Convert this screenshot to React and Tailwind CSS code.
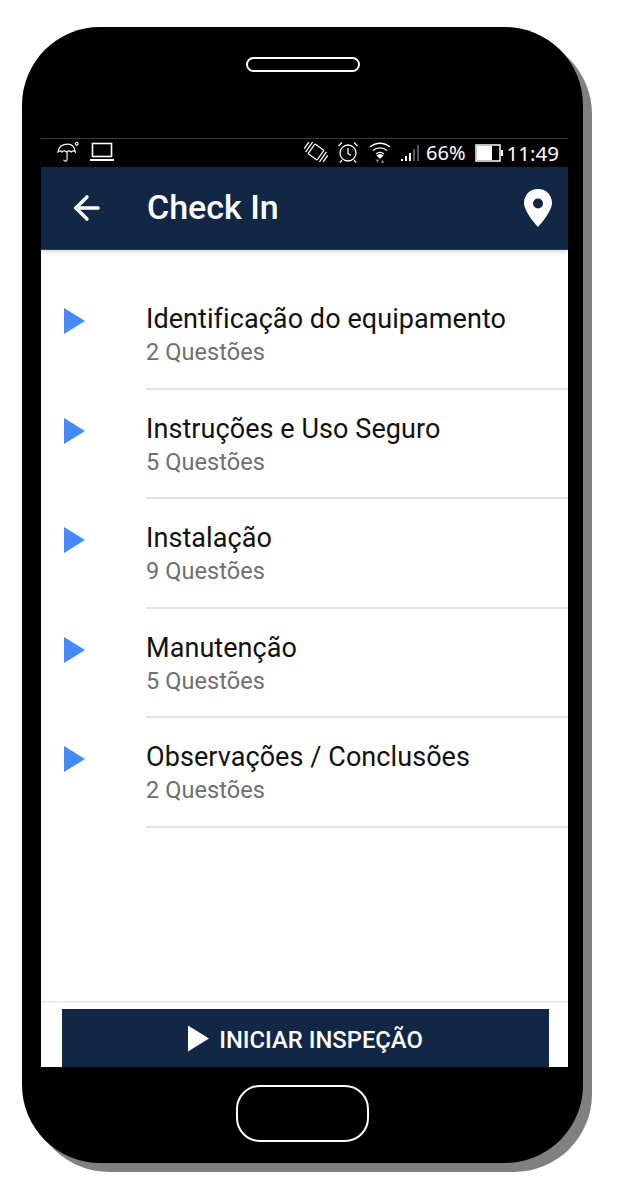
import { ArrowLeft } from 'lucide-react'

const sections = [
  { title: 'Identificação do equipamento', count: '2 Questões' },
  { title: 'Instruções e Uso Seguro', count: '5 Questões' },
  { title: 'Instalação', count: '9 Questões' },
  { title: 'Manutenção', count: '5 Questões' },
  { title: 'Observações / Conclusões', count: '2 Questões' },
]

function StatusBar() {
  return (
    <div className="h-[29px] shrink-0 bg-black border-t border-[#3a3a3a] flex items-center text-white font-['Noto_Sans',sans-serif] text-[20px] leading-none">
      <svg width="24" height="24" viewBox="0 0 26 24" fill="none" stroke="white" strokeWidth="1.2" className="ml-[15px] -mt-[3px]">
        <path d="M2 12C3 6 8 3.5 13 3.5S20 7 21 12c-1.5-1.5-3-1.5-4.5 0-1.500-1.500-3.500-1.500-5 0-1.500-1.500-3.500-1.500-5 0C5 10.500 3.500 10.500 2 12Z" />
        <path d="M12 12v8c0 2.500-3.500 2.500-3.500.5" />
        <circle cx="22.500" cy="3" r="1.500" />
      </svg>
      <svg width="26" height="20" viewBox="0 0 26 20" fill="none" stroke="white" strokeWidth="1.600" className="ml-[9px] -mt-[3px]">
        <rect x="3.500" y="1.500" width="19" height="13" />
        <path d="M1 18h24" strokeWidth="2" />
      </svg>
      <div className="ml-auto flex items-center">
        <svg width="26" height="26" viewBox="0 0 26 26" fill="none" stroke="white" strokeWidth="1.300" className="-mt-[3px]">
          <g transform="rotate(35 13 13)">
            <rect x="7.500" y="7" width="11" height="12" rx="1" />
            <path d="M4.500 7v12M1.500 9v8M21.500 7v12M24.500 9v8" />
          </g>
        </svg>
        <svg width="24" height="24" viewBox="0 0 24 24" fill="none" stroke="white" strokeWidth="1.300" className="ml-[7px] -mt-[2px]">
          <circle cx="12" cy="13" r="8" />
          <path d="M12 8v5.500l3 2M2.500 6 6 2.500M21.500 6 18 2.500M6 20l-2 2.500M18 20l2 2.500" />
        </svg>
        <svg width="24" height="24" viewBox="0 0 24 24" fill="none" stroke="white" strokeWidth="1.300" className="ml-[8px] -mt-[2px]">
          <path d="M2 7c6-5 14-5 20 0M5 10.500c4-3.500 10-3.500 14 0M8 14c2.500-2 5.500-2 8 0" />
          <path d="M12 18l-2.500-2.500c1.500-1 3.500-1 5 0Z" fill="white" />
          <path d="M9.500 23l2-3.500H7.500ZM14.500 19.500l2 3.500h-4Z" fill="#777" stroke="none" />
        </svg>
        <svg width="22" height="20" viewBox="0 0 22 20" className="ml-[7px]">
          <rect x="2" y="16" width="2" height="2" fill="white" />
          <rect x="6" y="13" width="2" height="5" fill="white" />
          <rect x="10" y="10" width="2" height="8" fill="white" />
          <rect x="14" y="6" width="2" height="12" fill="#555" />
          <rect x="18" y="2" width="2" height="16" fill="#555" />
        </svg>
        <span className="ml-[5px]">66%</span>
        <svg width="29" height="18" viewBox="0 0 29 18" className="ml-[9px]">
          <rect x="1" y="1" width="24" height="16" fill="none" stroke="white" strokeWidth="1.500" />
          <rect x="2" y="2" width="15" height="14" fill="white" />
          <rect x="26" y="6" width="2" height="6" fill="white" />
        </svg>
        <span className="ml-[3px] mr-[9px] text-[20.500px]">11:49</span>
      </div>
    </div>
  )
}

function Row({ title, count }) {
  return (
    <div className="h-[109.500px] flex">
      <div className="w-[105px] shrink-0 pl-[23px] pt-[28px]">
        <svg width="22" height="26" viewBox="0 0 22 26">
          <path d="M0 0 21 13 0 26Z" fill="#4689fb" />
        </svg>
      </div>
      <div className="flex-1 border-b-2 border-[#e2e2e2] font-['Roboto',sans-serif] pt-[23px]">
        <div className="text-[27px] leading-[32px] tracking-[0.07px] text-[#111]">{title}</div>
        <div className="text-[23.500px] leading-[26px] mt-[4px] tracking-[0.07px] text-[#6f6f6f]">{count}</div>
      </div>
    </div>
  )
}

export default function App() {
  return (
    <div className="w-[620px] h-[1198px] bg-white pt-[27px] pl-[22px] overflow-hidden">
      <div className="w-[561px] h-[1136px] bg-black rounded-[78px] shadow-[9px_9px_0_#808080] flex flex-col">
        <div className="h-[111px] shrink-0 pt-[30px] flex justify-center w-full">
          <div className="w-[114px] h-[15px] rounded-full border-2 border-white" />
        </div>
        <div className="ml-[19px] w-[527px] h-[929px] shrink-0 bg-white flex flex-col overflow-hidden">
          <StatusBar />
          <header className="h-[83px] shrink-0 bg-[#112745] flex items-center border-b border-[#2b3f58] shadow-[0_2px_4px_rgba(0,0,0,0.15)] relative">
            <ArrowLeft size={38} color="white" strokeWidth={2.200} className="ml-[27px]" />
            <h1 className="ml-[41px] -mt-[2px] font-['Roboto',sans-serif] font-medium text-[34px] text-white leading-none">Check In</h1>
            <svg width="30" height="38" viewBox="0 0 30 38" className="ml-auto mr-[15px]">
              <path fillRule="evenodd" d="M15 0C6.800 0 1 6.200 1 14c0 9 14 24 14 24s14-15 14-24C29 6.200 23.200 0 15 0Zm0 9.500a5 5 0 1 1 0 10 5 5 0 0 1 0-10Z" fill="white" />
            </svg>
          </header>
          <div className="flex-1 mt-[30px]">
            {sections.map((s) => (
              <Row key={s.title} title={s.title} count={s.count} />
            ))}
          </div>
          <footer className="h-[66px] shrink-0 border-t-2 border-[#ececec] pl-[21px] pr-[19px] pt-[6px]">
            <button className="w-full h-[80px] bg-[#112745] flex justify-center pt-[15px] font-['Roboto',sans-serif] font-medium text-[23.800px] leading-[32px] text-white">
              <svg width="21" height="27" viewBox="0 0 22 27" className="mr-[10px] mt-[1px]">
                <path d="M0 0 22 13.500 0 27Z" fill="white" />
              </svg>
              INICIAR INSPEÇÃO
            </button>
          </footer>
        </div>
        <div className="flex-1 w-full flex justify-center pt-[18px]">
          <div className="w-[133px] h-[57px] rounded-[24px] border-2 border-white" />
        </div>
      </div>
    </div>
  )
}
